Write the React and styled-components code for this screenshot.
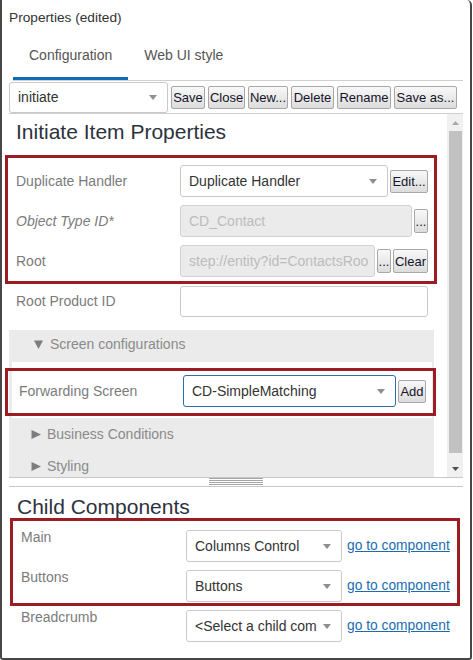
import styled, { createGlobalStyle } from "styled-components";

const GlobalStyle = createGlobalStyle`
  html, body {
    margin: 0;
    padding: 0;
    background: #fff;
  }
  body {
    font-family: "Liberation Sans", Arial, sans-serif;
  }
  * {
    box-sizing: border-box;
  }
`;

const App = () => {
    return (
        <>
            <GlobalStyle />
            <Window>
                <Title>Properties (edited)</Title>
                <TabList>
                    <Tab $active>Configuration</Tab>
                    <Tab>Web UI style</Tab>
                </TabList>
                <Toolbar>
                    <Select $w={159} $h={31}>initiate</Select>
                    <Btn $w={34}>Save</Btn>
                    <Btn $w={37}>Close</Btn>
                    <Btn $w={40}>New...</Btn>
                    <Btn $w={43}>Delete</Btn>
                    <Btn $w={54}>Rename</Btn>
                    <Btn $w={63}>Save as...</Btn>
                </Toolbar>

                <Viewport>
                    <Content>
                        <Heading>Initiate Item Properties</Heading>
                        <FormHighlight>
                            <Row>
                                <Label>Duplicate Handler</Label>
                                <Controls>
                                    <Select $flex>Duplicate Handler</Select>
                                    <Btn $w={38}>Edit...</Btn>
                                </Controls>
                            </Row>
                            <Row>
                                <Label $italic>Object Type ID*</Label>
                                <Controls>
                                    <Field $disabled>CD_Contact</Field>
                                    <Btn $w={14} $h={24}>...</Btn>
                                </Controls>
                            </Row>
                            <Row>
                                <Label>Root</Label>
                                <Controls>
                                    <Field $disabled>
                                        step://entity?id=ContactsRoo
                                    </Field>
                                    <Btn $w={14} $h={24}>...</Btn>
                                    <Btn $w={35} $h={24}>Clear</Btn>
                                </Controls>
                            </Row>
                        </FormHighlight>
                        <Row>
                            <Label>Root Product ID</Label>
                            <Controls>
                                <Field $h={31} />
                            </Controls>
                        </Row>

                        <Section>
                            <SectionHead $open>
                                <Tri open />
                                Screen configurations
                            </SectionHead>
                            <Panel>
                                <PanelHighlight>
                                    <PanelRow>
                                        <PanelLabel>Forwarding Screen</PanelLabel>
                                        <Select $flex $focus>
                                            CD-SimpleMatching
                                        </Select>
                                        <Btn $w={28}>Add</Btn>
                                    </PanelRow>
                                </PanelHighlight>
                            </Panel>
                            <SectionHead>
                                <Tri />
                                Business Conditions
                            </SectionHead>
                            <SectionHead>
                                <Tri />
                                Styling
                            </SectionHead>
                        </Section>
                    </Content>
                    <Scrollbar>
                        <ScrollArrow $h={17}>
                            <svg width="7" height="4" viewBox="0 0 7 4">
                                <path d="M0 4L3.5 0L7 4Z" fill="#a9a9a9" />
                            </svg>
                        </ScrollArrow>
                        <ScrollThumb />
                        <ScrollTrack />
                        <ScrollArrow $h={16}>
                            <svg width="7" height="4" viewBox="0 0 7 4">
                                <path d="M0 0L7 0L3.5 4Z" fill="#4e4e4e" />
                            </svg>
                        </ScrollArrow>
                    </Scrollbar>
                </Viewport>

                <Splitter>
                    <Grip />
                </Splitter>

                <Children>
                    <ChildHeading>Child Components</ChildHeading>
                    <ChildHighlight>
                        <ChildRow>
                            <ChildLabel>Main</ChildLabel>
                            <Select $w={156}>Columns Control</Select>
                            <Link href="#">go to component</Link>
                        </ChildRow>
                        <ChildRow>
                            <ChildLabel>Buttons</ChildLabel>
                            <Select $w={156}>Buttons</Select>
                            <Link href="#">go to component</Link>
                        </ChildRow>
                    </ChildHighlight>
                    <PlainRows>
                        <ChildRow>
                            <ChildLabel>Breadcrumb</ChildLabel>
                            <Select $w={156}>&lt;Select a child com</Select>
                            <Link href="#">go to component</Link>
                        </ChildRow>
                    </PlainRows>
                </Children>
            </Window>
        </>
    );
};
export default App;

//Select with the small grey caret
const Select = ({ children, ...props }) => (
    <SelectBox {...props}>
        <SelectText>{children}</SelectText>
        <Caret />
    </SelectBox>
);

const Tri = ({ open }) =>
    open ? (
        <svg width="9" height="9" viewBox="0 0 9 9">
            <path d="M0 0.5H9L4.5 9Z" fill="#7c7c7c" />
        </svg>
    ) : (
        <svg width="10" height="9" viewBox="0 0 10 9">
            <path d="M0.5 0V9L10 4.5Z" fill="#7c7c7c" />
        </svg>
    );

const Window = styled.div`
    width: 472px;
    height: 660px;
    border: 2px solid #474747;
    border-top: none;
    border-radius: 0 5px 3px 3px;
    display: flex;
    flex-direction: column;
    overflow: hidden;
    background: #fff;
    color: #333;
`;
const Title = styled.div`
    padding: 10px 7px 0;
    font-size: 13.7px;
    line-height: 16px;
    color: #333;
    flex: none;
`;
const TabList = styled.div`
    display: flex;
    margin: 0 7px 0 11px;
    border-bottom: 1px solid #cfcfcf;
    flex: none;
`;
const Tab = styled.div`
    padding: 21px 16px 14px;
    font-size: 14px;
    line-height: 16px;
    color: #555;
    border-bottom: 3px solid ${(p) => (p.$active ? "#0f6cb5" : "transparent")};
`;
const Toolbar = styled.div`
    display: flex;
    align-items: center;
    gap: 3px;
    height: 33px;
    margin: 0 7px;
    border-bottom: 1px solid #cfcfcf;
    flex: none;
`;
const SelectBox = styled.div`
    display: flex;
    align-items: center;
    ${(p) => (p.$flex ? "flex: 1; min-width: 0;" : `flex: none; width: ${p.$w}px;`)}
    height: ${(p) => p.$h || 32}px;
    padding: 0 10px 0 8px;
    border: 1px solid ${(p) => (p.$focus ? "#2c6db0" : "#c9c9c9")};
    border-radius: 3px;
    background: #fff;
    font-size: 14px;
    color: #333;
`;
const SelectText = styled.span`
    flex: 1;
    min-width: 0;
    white-space: nowrap;
    overflow: hidden;
`;
const Caret = styled.span`
    flex: none;
    width: 0;
    height: 0;
    margin-left: 3px;
    border-left: 4.5px solid transparent;
    border-right: 4.5px solid transparent;
    border-top: 5px solid #8e8e8e;
`;
const Btn = styled.button`
    flex: none;
    height: ${(p) => p.$h || 23}px;
    ${(p) => p.$w && `width: ${p.$w}px;`}
    margin: 0;
    padding: 0;
    border: 1px solid #a8a8a8;
    border-radius: 2px;
    background: linear-gradient(#f8f8f8, #dcdcdc);
    color: #14142a;
    font: 13px/1 "Liberation Sans", Arial, sans-serif;
    white-space: nowrap;
    overflow: hidden;
`;
const Viewport = styled.div`
    display: flex;
    height: 363px;
    margin-right: 7px;
    overflow: hidden;
    flex: none;
`;
const Content = styled.div`
    flex: 1;
    min-width: 0;
    display: flex;
    flex-direction: column;
    padding: 0 13px 0 6px;
`;
const Heading = styled.h2`
    margin: 4px 0 0;
    padding-left: 8px;
    font-size: 21px;
    font-weight: normal;
    line-height: 28px;
    color: #2c323d;
`;
const Highlight = styled.div`
    border: 3px solid #9d1b22;
    flex: none;
`;
const FormHighlight = styled(Highlight)`
    margin: 9px -3px -3px;
    padding-top: 3px;
`;
const Row = styled.div`
    display: flex;
    align-items: center;
    height: 40px;
    padding-right: 6px;
    flex: none;
`;
const Label = styled.div`
    width: 172px;
    flex: none;
    padding-left: 8px;
    font-size: 14px;
    color: #7b7b7b;
    font-style: ${(p) => (p.$italic ? "italic" : "normal")};
`;
const Controls = styled.div`
    flex: 1;
    min-width: 0;
    display: flex;
    align-items: center;
    gap: 2px;
`;
const Field = styled.div`
    flex: 1;
    min-width: 0;
    height: ${(p) => p.$h || 32}px;
    display: flex;
    align-items: center;
    padding: 0 8px;
    border: 1px solid ${(p) => (p.$disabled ? "#d3d3d3" : "#c9c9c9")};
    border-radius: 3px;
    background: ${(p) => (p.$disabled ? "#ebebeb" : "#fff")};
    color: #bcbcbc;
    font-size: 14px;
    white-space: nowrap;
    overflow: hidden;
`;
const Section = styled.div`
    margin: 9px 0 0 1px;
    padding: 0 2px 0 3px;
    background: #ebebeb;
    flex: none;
`;
const SectionHead = styled.div`
    display: flex;
    align-items: center;
    gap: ${(p) => (p.$open ? 7 : 6)}px;
    height: 32px;
    padding: 0 0 ${(p) => (p.$open ? 4 : 0)}px ${(p) => (p.$open ? 22 : 19)}px;
    font-size: 14px;
    color: #8a8a8a;
`;
const Panel = styled.div`
    background: #fff;
    padding: 6px 0 2px;
`;
const PanelHighlight = styled(Highlight)`
    margin: 0 -4px 0 -7px;
`;
const PanelRow = styled.div`
    display: flex;
    align-items: center;
    gap: 2px;
    padding: 4px 7px 6px 0;
`;
const PanelLabel = styled.div`
    width: 173px;
    flex: none;
    padding-left: 11px;
    font-size: 14px;
    color: #7b7b7b;
`;
const Scrollbar = styled.div`
    width: 16px;
    flex: none;
    display: flex;
    flex-direction: column;
    align-items: center;
    background: #f0f0f0;
`;
const ScrollArrow = styled.div`
    height: ${(p) => p.$h}px;
    display: flex;
    align-items: center;
    justify-content: center;
    flex: none;
`;
const ScrollThumb = styled.div`
    width: 13px;
    height: 322px;
    background: #c1c1c1;
    flex: none;
`;
const ScrollTrack = styled.div`
    flex: 1;
`;
const Splitter = styled.div`
    height: 10px;
    margin: 0 7px;
    border-top: 1px solid #c8c8c8;
    border-bottom: 1px solid #c8c8c8;
    display: flex;
    justify-content: center;
    flex: none;
`;
const Grip = styled.div`
    width: 54px;
    height: 7px;
    background: repeating-linear-gradient(#a5a5a5 0 1px, #fff 1px 2px);
`;
const Children = styled.div`
    flex: 1;
    display: flex;
    flex-direction: column;
`;
const ChildHeading = styled.h2`
    margin: 9px 0 0;
    padding-left: 15px;
    font-size: 21px;
    font-weight: normal;
    line-height: 22px;
    color: #2c323d;
`;
const ChildHighlight = styled(Highlight)`
    margin: 0 10px 0 8px;
    padding: 9px 0 1px;
    display: flex;
    flex-direction: column;
    gap: 8px;
`;
const PlainRows = styled.div`
    margin: 4px 10px 0 11px;
`;
const ChildRow = styled.div`
    display: flex;
    align-items: flex-start;
    height: 32px;
`;
const ChildLabel = styled.div`
    width: 173px;
    flex: none;
    padding-left: 8px;
    font-size: 14px;
    line-height: 14px;
    color: #7b7b7b;
`;
const Link = styled.a`
    margin-left: 5px;
    font-size: 13.8px;
    line-height: 32px;
    color: #1c6bb2;
    text-decoration: underline;
    white-space: nowrap;
`;
